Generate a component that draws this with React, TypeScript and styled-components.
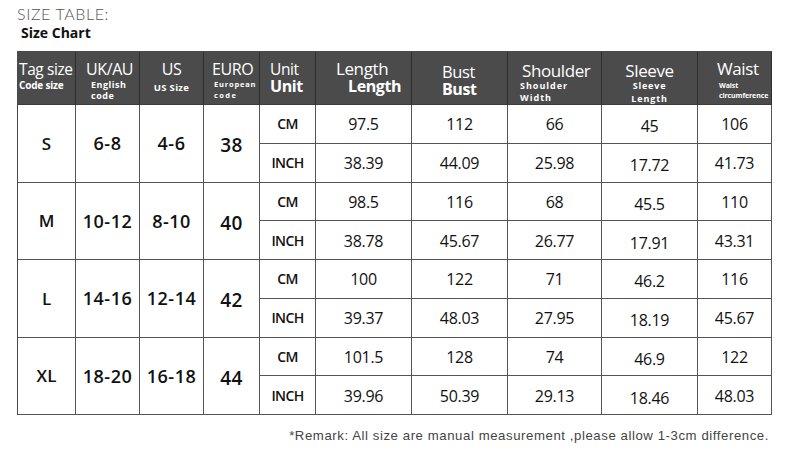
import React from "react";
import styled, { createGlobalStyle } from "styled-components";

const Global = createGlobalStyle`
  html, body { margin: 0; padding: 0; background: #fff; }
  body { font-family: "Open Sans", "Liberation Sans", sans-serif; }
`;

const Page = styled.div`
  width: 790px;
  height: 468px;
  box-sizing: border-box;
  padding: 4px 19px 0 17px;
  display: flex;
  flex-direction: column;
`;

const Title = styled.div`
  font-family: Lato, "Liberation Sans", sans-serif;
  font-weight: 300;
  font-size: 16px;
  line-height: 19px;
  color: #555;
  margin-left: 0;
  letter-spacing: 0.6px;
`;

const Subtitle = styled.div`
  font-family: "Open Sans", sans-serif;
  font-weight: 700;
  font-size: 14px;
  line-height: 18px;
  color: #111;
  margin-left: 4px;
  margin-top: 1px;
`;

const Table = styled.div`
  margin-top: 9px;
  width: 755px;
  height: 364px;
  box-sizing: border-box;
  display: grid;
  grid-template-columns: 58px 64px 64px 56px 56px 96px 96px 94px 96px 74px;
  grid-template-rows: 53px repeat(8, 1fr);
  border-left: 1px solid #4a4a4a;
  border-top: 1px solid #4a4a4a;
`;

const HeaderCell = styled.div<{ $pad?: number; $center?: boolean; $top?: number }>`
  background: #4b4b4b;
  color: #fff;
  border-right: 1px solid #2e2e2e;
  border-bottom: 1px solid #3a3a3a;
  box-sizing: border-box;
  display: flex;
  flex-direction: column;
  justify-content: flex-start;
  align-items: ${(p) => (p.$center ? "center" : "flex-start")};
  padding-left: ${(p) => p.$pad ?? 0}px;
  padding-top: ${(p) => p.$top ?? 8}px;
  overflow: hidden;
`;

const HeadMain = styled.span<{ $size?: number; $indent?: number; $bold?: boolean }>`
  display: block;
  font-size: ${(p) => p.$size ?? 16}px;
  font-weight: ${(p) => (p.$bold ? 700 : 400)};
  line-height: ${(p) => (p.$size ?? 16) + 1}px;
  letter-spacing: -0.4px;
  margin-left: ${(p) => p.$indent ?? 0}px;
  white-space: nowrap;
`;

const HeadSub = styled.span<{ $size?: number; $indent?: number; $spacing?: number; $gap?: number }>`
  display: block;
  font-size: ${(p) => p.$size ?? 9}px;
  font-weight: 700;
  line-height: ${(p) => (p.$size ?? 9) + 2}px;
  letter-spacing: ${(p) => p.$spacing ?? 0.6}px;
  margin-left: ${(p) => p.$indent ?? 0}px;
  margin-top: ${(p) => p.$gap ?? 0}px;
  white-space: nowrap;
`;

const Cell = styled.div<{ $span?: number; $size?: number; $weight?: number; $drop?: number; $spacing?: number }>`
  grid-row: span ${(p) => p.$span ?? 1};
  border-right: 1px solid #555;
  border-bottom: 1px solid #555;
  box-sizing: border-box;
  display: flex;
  align-items: center;
  justify-content: center;
  padding-top: ${(p) => p.$drop ?? 0}px;
  font-size: ${(p) => p.$size ?? 16}px;
  font-weight: ${(p) => p.$weight ?? 400};
  letter-spacing: ${(p) => p.$spacing ?? -0.3}px;
  color: #111;
  white-space: nowrap;
`;

const Remark = styled.div`
  margin-top: 13px;
  align-self: flex-end;
  margin-right: 2px;
  font-family: "Liberation Sans", sans-serif;
  font-size: 13.2px;
  color: #444;
  letter-spacing: 0.57px;
`;

type Row = {
  tag: string;
  uk: string;
  us: string;
  euro: string;
  cm: string[];
  inch: string[];
};

const rows: Row[] = [
  { tag: "S", uk: "6-8", us: "4-6", euro: "38", cm: ["97.5", "112", "66", "45", "106"], inch: ["38.39", "44.09", "25.98", "17.72", "41.73"] },
  { tag: "M", uk: "10-12", us: "8-10", euro: "40", cm: ["98.5", "116", "68", "45.5", "110"], inch: ["38.78", "45.67", "26.77", "17.91", "43.31"] },
  { tag: "L", uk: "14-16", us: "12-14", euro: "42", cm: ["100", "122", "71", "46.2", "116"], inch: ["39.37", "48.03", "27.95", "18.19", "45.67"] },
  { tag: "XL", uk: "18-20", us: "16-18", euro: "44", cm: ["101.5", "128", "74", "46.9", "122"], inch: ["39.96", "50.39", "29.13", "18.46", "48.03"] },
];

const Measures = ({ values }: { values: string[] }) => (
  <>
    {values.map((v, i) => (
      <Cell key={i} $drop={i === 3 ? 5 : 1}>
        {v}
      </Cell>
    ))}
  </>
);

export default function App() {
  return (
    <>
      <Global />
      <Page>
        <Title>SIZE TABLE:</Title>
        <Subtitle>Size Chart</Subtitle>
        <Table>
          <HeaderCell $pad={1} $top={9}>
            <HeadMain $size={15.5}>Tag size</HeadMain>
            <HeadSub $size={10} $spacing={-0.2} $gap={1}>Code size</HeadSub>
          </HeaderCell>
          <HeaderCell $pad={10} $top={9}>
            <HeadMain $size={16}>UK/AU</HeadMain>
            <HeadSub $size={9} $indent={5} $spacing={0.5} $gap={1}>English</HeadSub>
            <HeadSub $size={9} $indent={5} $spacing={0.5}>code</HeadSub>
          </HeaderCell>
          <HeaderCell $center $top={9}>
            <HeadMain $size={16}>US</HeadMain>
            <HeadSub $size={9.5} $spacing={0.3} $gap={4}>US Size</HeadSub>
          </HeaderCell>
          <HeaderCell $pad={8} $top={9}>
            <HeadMain $size={16}>EURO</HeadMain>
            <HeadSub $size={7.5} $indent={2} $spacing={0.8} $gap={2}>European</HeadSub>
            <HeadSub $size={7.5} $indent={2} $spacing={1.4} $gap={1}>code</HeadSub>
          </HeaderCell>
          <HeaderCell $pad={10} $top={9}>
            <HeadMain $size={15.5}>Unit</HeadMain>
            <HeadMain $size={16} $bold>Unit</HeadMain>
          </HeaderCell>
          <HeaderCell $pad={20} $top={8}>
            <HeadMain $size={17}>Length</HeadMain>
            <HeadMain $size={16} $bold $indent={12}>Length</HeadMain>
          </HeaderCell>
          <HeaderCell $pad={30} $top={11}>
            <HeadMain $size={16.5}>Bust</HeadMain>
            <HeadMain $size={16} $bold>Bust</HeadMain>
          </HeaderCell>
          <HeaderCell $pad={14} $top={10}>
            <HeadMain $size={17}>Shoulder</HeadMain>
            <HeadSub $size={9} $spacing={1} $indent={-2}>Shoulder</HeadSub>
            <HeadSub $size={9} $spacing={1} $indent={-2} $gap={1}>Width</HeadSub>
          </HeaderCell>
          <HeaderCell $center $top={10}>
            <HeadMain $size={17}>Sleeve</HeadMain>
            <HeadSub $size={9} $spacing={0.8}>Sleeve</HeadSub>
            <HeadSub $size={9} $spacing={0.9} $gap={2}>Length</HeadSub>
          </HeaderCell>
          <HeaderCell $pad={19} $top={8}>
            <HeadMain $size={17}>Waist</HeadMain>
            <HeadSub $size={7} $spacing={-0.1} $indent={2} $gap={3}>Waist</HeadSub>
            <HeadSub $size={7} $spacing={-0.1} $indent={2} $gap={1}>circumference</HeadSub>
          </HeaderCell>

          {rows.map((r) => (
            <React.Fragment key={r.tag}>
              <Cell $span={2} $size={17} $weight={600} $spacing={0}>{r.tag}</Cell>
              <Cell $span={2} $size={18} $weight={600} $spacing={0.5}>{r.uk}</Cell>
              <Cell $span={2} $size={18} $weight={600} $spacing={0.5}>{r.us}</Cell>
              <Cell $span={2} $size={19} $weight={600} $spacing={0.3} $drop={4}>{r.euro}</Cell>
              <Cell $size={14} $weight={600} $spacing={-0.6}>CM</Cell>
              <Measures values={r.cm} />
              <Cell $size={14} $weight={600} $spacing={-0.6}>INCH</Cell>
              <Measures values={r.inch} />
            </React.Fragment>
          ))}
        </Table>
        <Remark>*Remark: All size are manual measurement ,please allow 1-3cm difference.</Remark>
      </Page>
    </>
  );
}
